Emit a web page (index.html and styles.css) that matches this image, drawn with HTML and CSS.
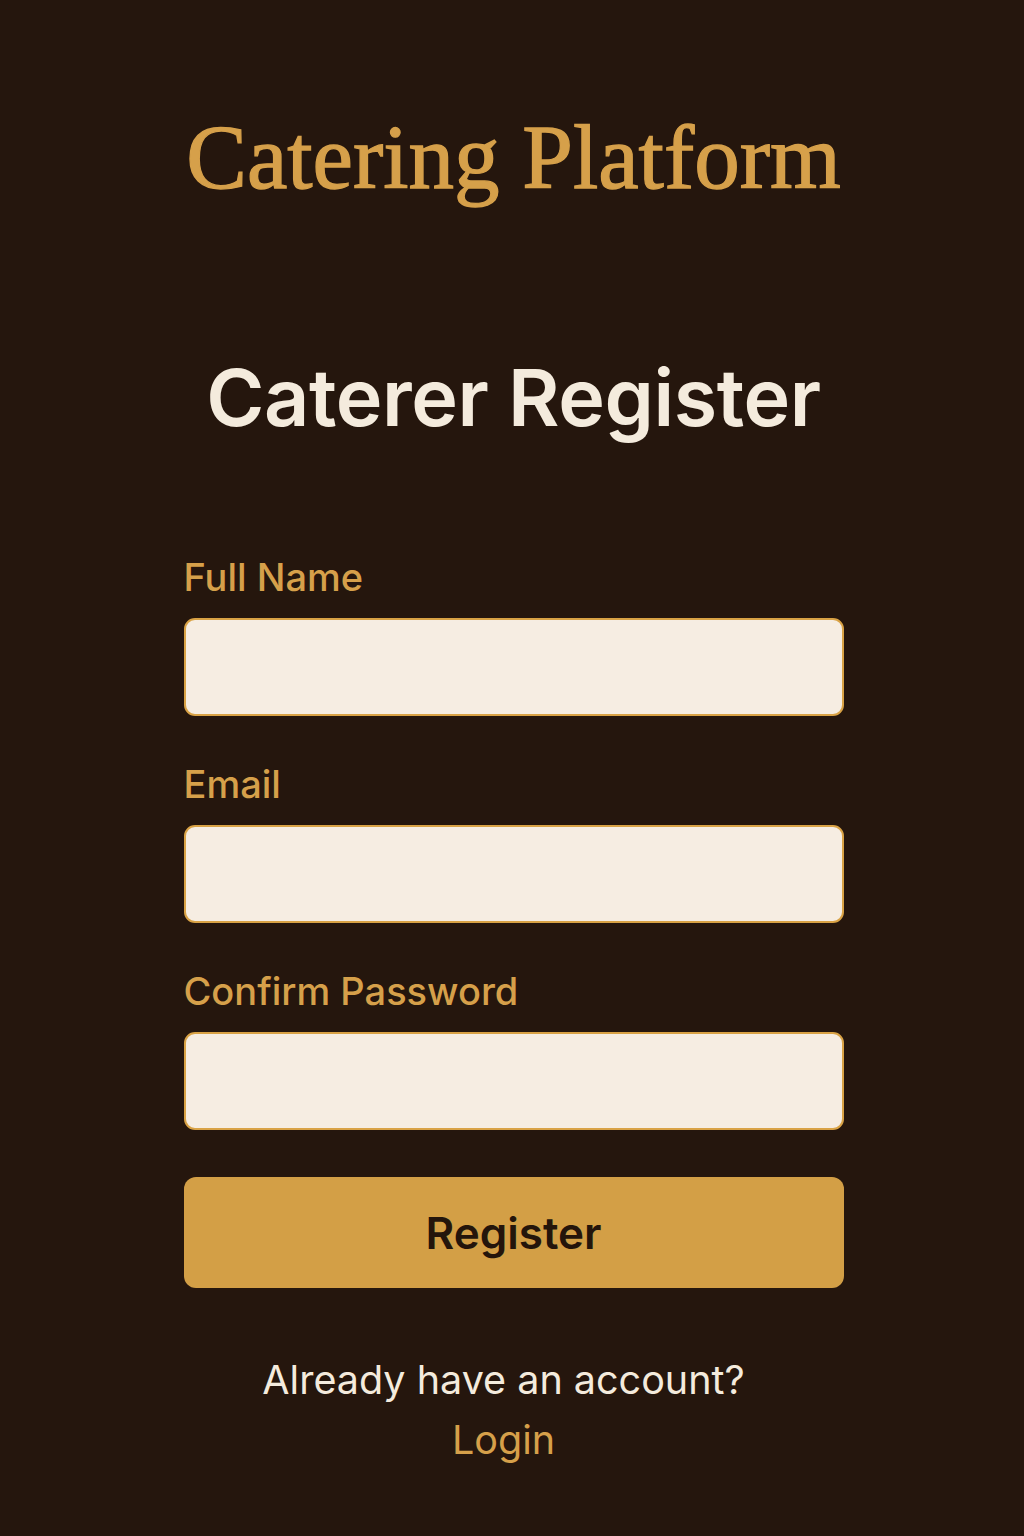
FILE: index.html
```html
<!DOCTYPE html>
<html lang="en">
<head>
<meta charset="utf-8">
<title>Caterer Register</title>
<link rel="stylesheet" href="styles.css">
</head>
<body>
<main class="page">
  <h1 class="brand">Catering Platform</h1>
  <h2 class="heading">Caterer Register</h2>
  <form class="form">
    <label class="field">
      <span class="label">Full Name</span>
      <input class="input" type="text">
    </label>
    <label class="field">
      <span class="label">Email</span>
      <input class="input" type="email">
    </label>
    <label class="field">
      <span class="label">Confirm Password</span>
      <input class="input" type="password">
    </label>
    <button class="btn" type="button">Register</button>
  </form>
  <p class="footer">Already have an account?<br><a class="link" href="#">Login</a></p>
</main>
</body>
</html>
```
FILE: styles.css
```css
html, body {
  margin: 0;
  padding: 0;
  background: #25160d;
}
body {
  font-family: Inter, "Noto Sans", sans-serif;
  min-height: 1536px;
}
.page {
  width: 660px;
  margin: 0 auto;
  padding-top: 113px;
  padding-left: 3px;
  display: flex;
  flex-direction: column;
  align-items: stretch;
}
.brand {
  margin: 0;
  font-family: "Liberation Serif", "Times New Roman", serif;
  font-weight: 400;
  font-size: 91px;
  line-height: 90px;
  color: #d6a04a;
  text-align: center;
  -webkit-text-stroke: 1.3px #d6a04a;
}
.heading {
  margin: 155px 0 0;
  font-weight: 600;
  font-size: 79px;
  line-height: 78px;
  color: #f4ebdd;
  text-align: center;
  letter-spacing: -0.4px;
}
.form {
  margin-top: 120px;
  display: flex;
  flex-direction: column;
}
.field {
  display: flex;
  flex-direction: column;
  gap: 19px;
  margin-bottom: 47px;
}
.label {
  font-size: 38px;
  line-height: 43px;
  font-weight: 500;
  color: #d6a04a;
}
.input {
  box-sizing: border-box;
  height: 98px;
  width: 100%;
  margin: 0;
  background: #f6ede2;
  border: 2px solid #d9a245;
  border-radius: 11px;
  padding: 0 20px;
  font: inherit;
  outline: none;
}
.btn {
  height: 111px;
  width: 100%;
  margin: 0;
  border: none;
  border-radius: 12px;
  background: #d39f46;
  color: #24150b;
  font-family: inherit;
  font-size: 44px;
  font-weight: 600;
  cursor: pointer;
}
.footer {
  margin: 62px 0 0;
  padding-right: 20px;
  text-align: center;
  font-size: 39.5px;
  line-height: 60px;
  color: #f4ebdd;
}
.link {
  color: #d6a04a;
  text-decoration: none;
}
```
